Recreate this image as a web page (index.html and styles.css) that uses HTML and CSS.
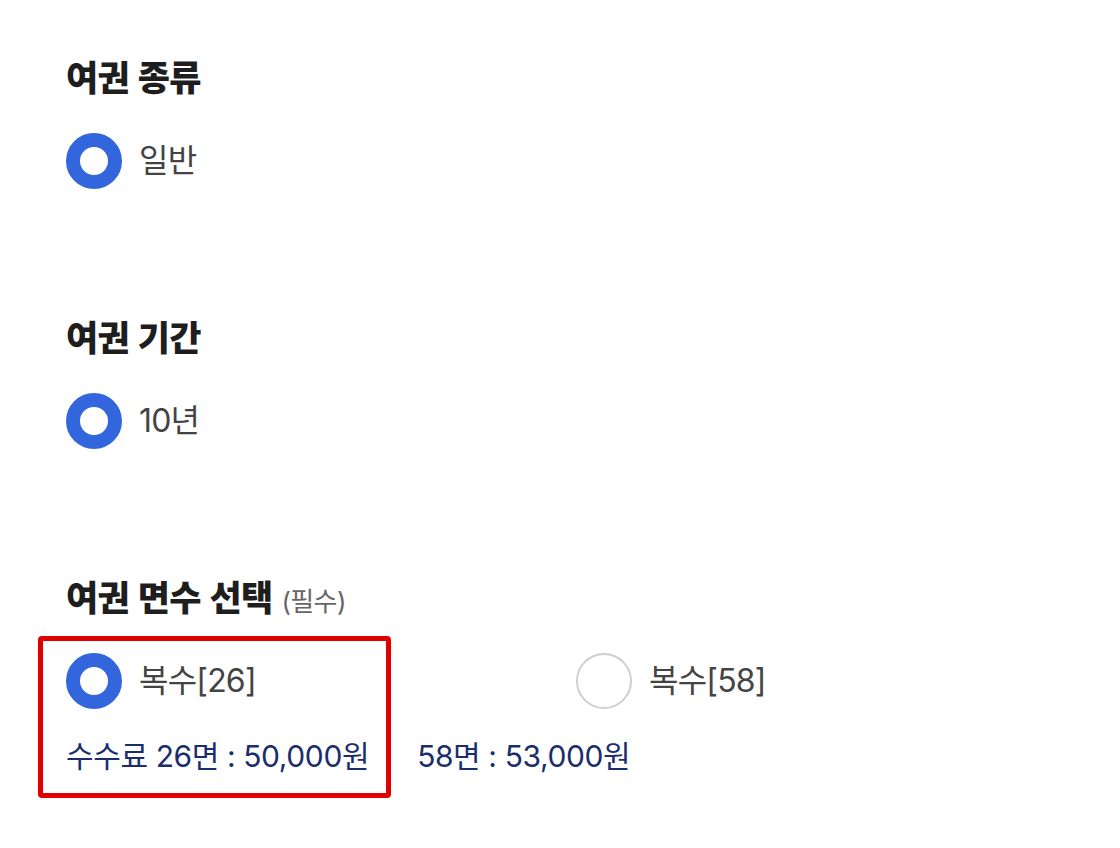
FILE: index.html
```html
<!DOCTYPE html>
<html lang="ko">
<head>
<meta charset="utf-8">
<link rel="stylesheet" href="styles.css">
</head>
<body>
<div class="page">
  <section class="group">
    <h2 class="title">여권 종류</h2>
    <div class="options">
      <label class="option"><span class="radio checked"></span><span class="label">일반</span></label>
    </div>
  </section>
  <section class="group">
    <h2 class="title">여권 기간</h2>
    <div class="options">
      <label class="option"><span class="radio checked"></span><span class="label">10년</span></label>
    </div>
  </section>
  <section class="group last">
    <h2 class="title">여권 면수 선택 <span class="req">(필수)</span></h2>
    <div class="choice">
      <div class="options two">
        <label class="option"><span class="radio checked"></span><span class="label">복수[26]</span></label>
        <label class="option"><span class="radio"></span><span class="label">복수[58]</span></label>
      </div>
      <p class="fee"><span>수수료 26면 : 50,000원</span><span>58면 : 53,000원</span></p>
      <div class="highlight"></div>
    </div>
  </section>
</div>
</body>
</html>
```
FILE: styles.css
```css
* { box-sizing: border-box; }
html, body { margin: 0; padding: 0; background: #fff; }
body {
  font-family: Inter, "Noto Sans CJK KR", sans-serif;
  color: #222;
  width: 1120px;
  height: 848px;
  overflow: hidden;
}
.page {
  padding: 56px 66px 0 66px;
  display: flex;
  flex-direction: column;
  gap: 127px;
}
.group { display: flex; flex-direction: column; gap: 37px; }
.title {
  margin: 0;
  height: 40px;
  font-family: "Noto Sans CJK KR", sans-serif;
  font-size: 35px;
  line-height: 40px;
  font-weight: 900;
  letter-spacing: -0.8px;
  color: #1e1e1e;
  white-space: nowrap;
}
.req {
  font-family: Inter, "Noto Sans CJK KR", sans-serif;
  font-size: 26px;
  font-weight: 400;
  color: #666;
  letter-spacing: -0.6px;
}
.options { display: flex; height: 56px; }
.options.two { display: grid; grid-template-columns: 510px auto; }
.option { display: flex; align-items: center; gap: 17px; height: 56px; }
.radio {
  width: 56px;
  height: 56px;
  border-radius: 50%;
  border: 2px solid #cfcfcf;
  background: #fff;
  flex: none;
}
.radio.checked { border: 14px solid #3366dd; }
.label {
  font-size: 32px;
  line-height: 40px;
  color: #444;
  letter-spacing: -0.8px;
}
.choice { position: relative; }
.fee {
  margin: 30px 0 0 0;
  height: 34px;
  display: flex;
  gap: 48px;
  font-size: 30px;
  line-height: 34px;
  font-weight: 400;
  color: #1a2d6c;
  letter-spacing: -0.4px;
  white-space: nowrap;
}
.highlight {
  position: absolute;
  left: -28px;
  top: -17px;
  width: 353px;
  height: 162px;
  border: 5px solid #e00000;
  border-radius: 4px;
  pointer-events: none;
}
```
